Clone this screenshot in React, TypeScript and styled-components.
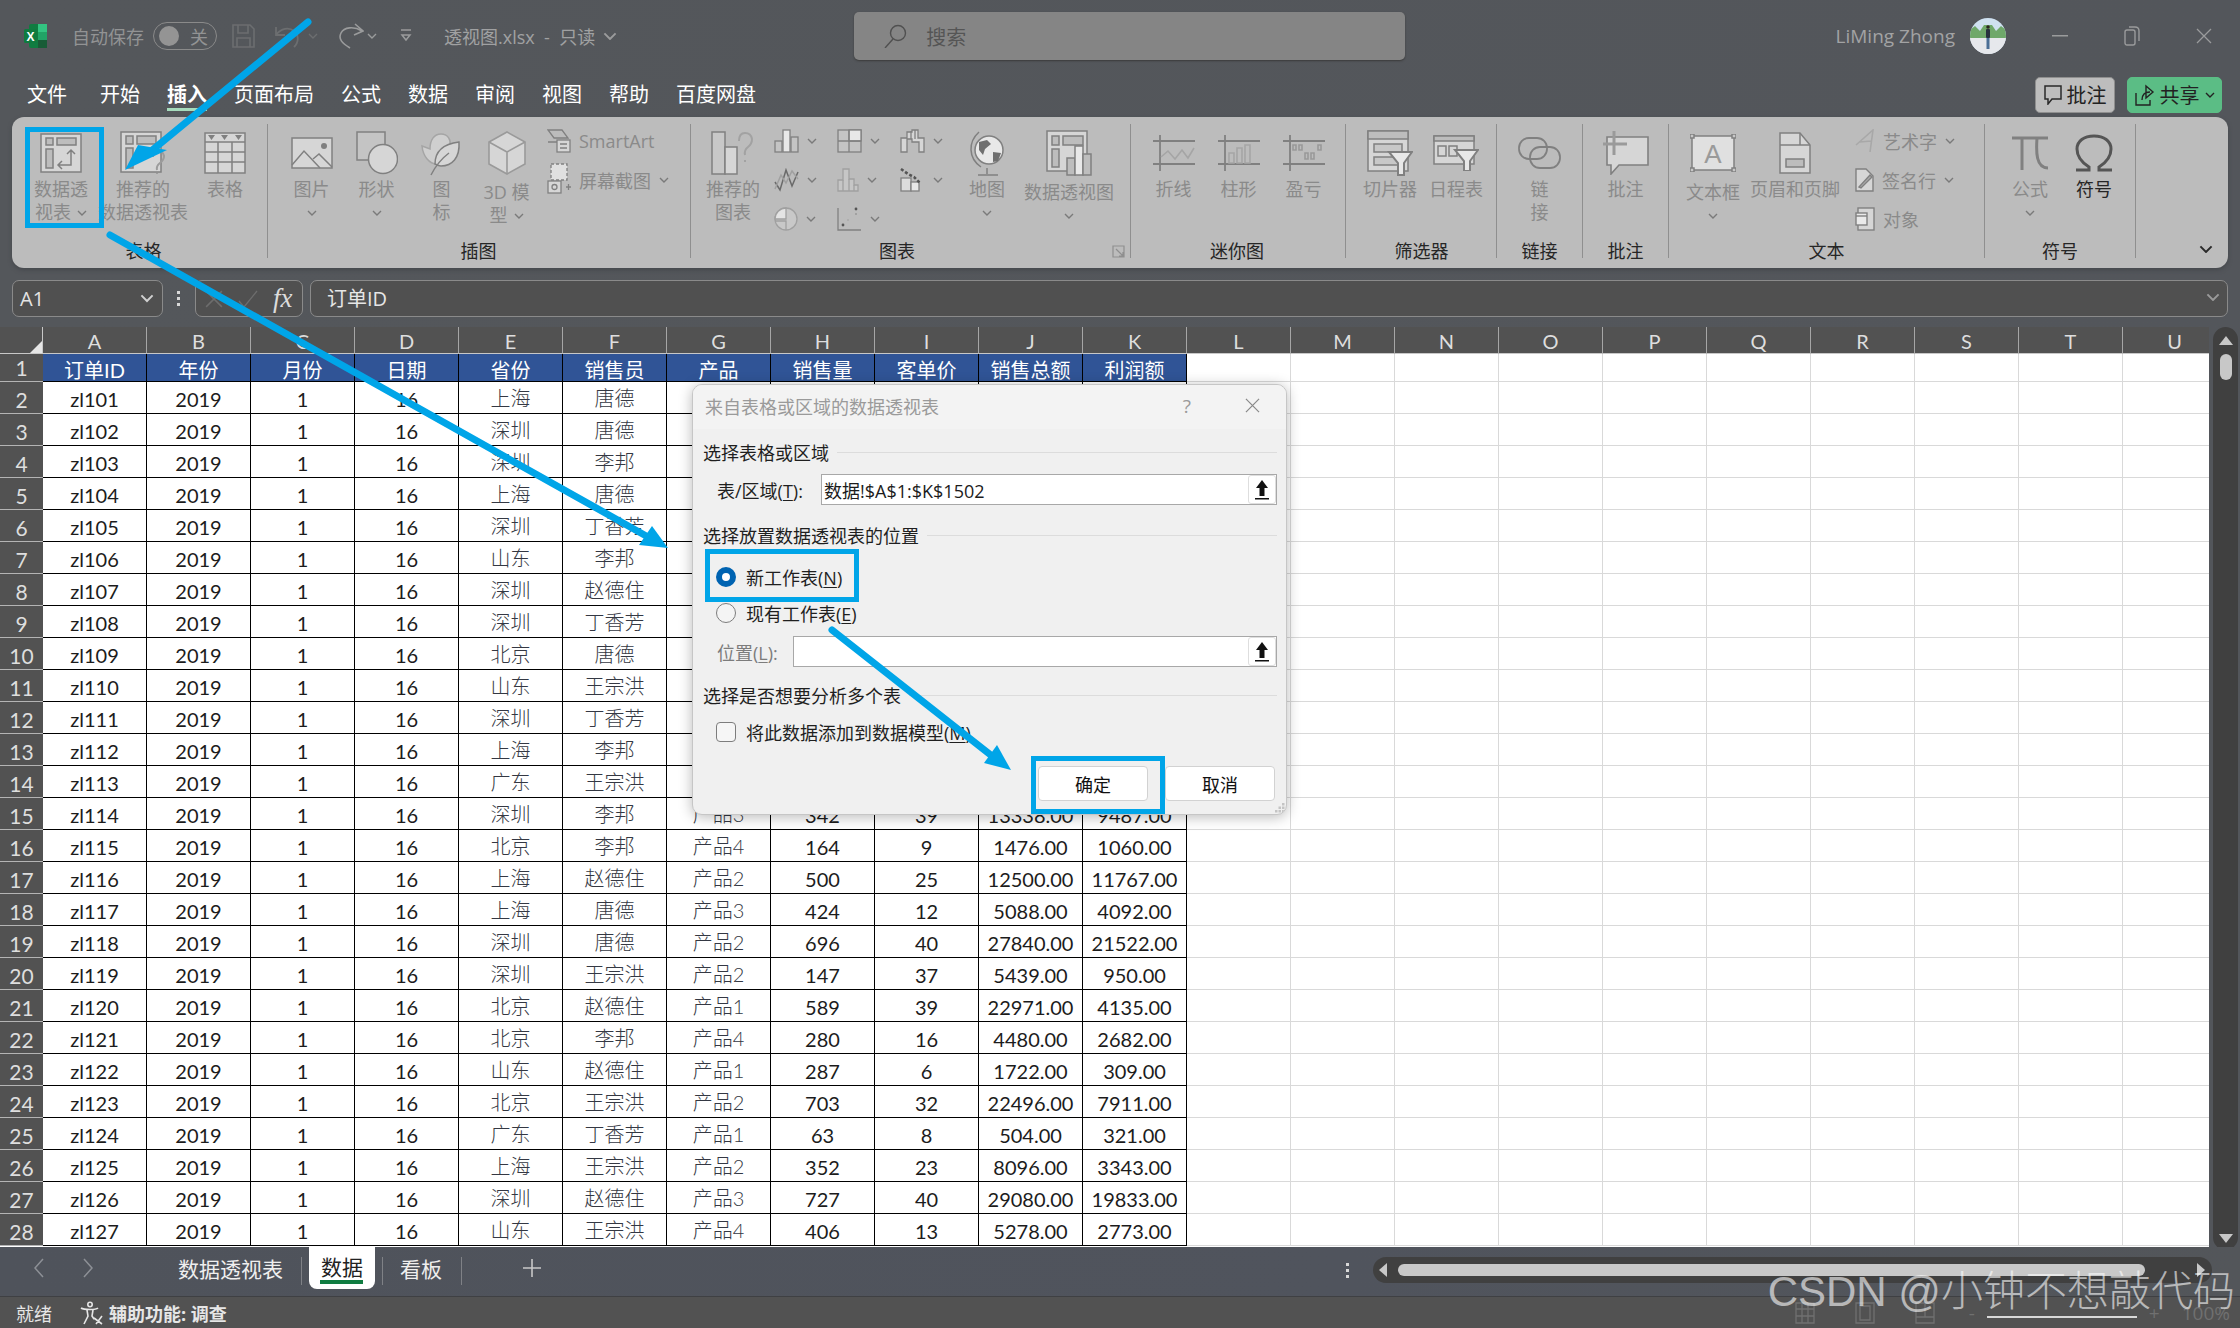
import React from "react";
import styled, { createGlobalStyle } from "styled-components";

const S = "#808080";
const F = "#d6d6d6";
const BLUE = "#00a5e8";

const GlobalStyle = createGlobalStyle`
  html, body {
    margin: 0;
    padding: 0;
    background: #54575b;
  }
  * {
    box-sizing: border-box;
  }
  body {
    font-family: "Open Sans", "Noto Sans CJK SC", sans-serif;
  }
`;

const Page = styled.div`
  position: relative;
  width: 2240px;
  height: 1328px;
  overflow: hidden;
  display: flex;
  flex-direction: column;
  background: linear-gradient(90deg, #54575b, #53565b);
`;

/* title bar */
const TitleBar = styled.div`
  height: 72px;
  flex: none;
  display: flex;
  align-items: center;
  padding-left: 24px;
  color: #929394;
`;
const Slot = styled.div<{ $ml?: number }>`
  margin-left: ${(p) => p.$ml ?? 0}px;
  display: flex;
  align-items: center;
  flex: none;
`;
const AutoSave = styled.span`
  margin-left: 24px;
  font-size: 18px;
`;
const Toggle = styled.div`
  margin-left: 9px;
  width: 64px;
  height: 28px;
  border: 1.5px solid #8a8a8a;
  border-radius: 14px;
  display: flex;
  align-items: center;
  padding-left: 5px;
  font-size: 18px;
  gap: 11px;
  &::before {
    content: "";
    width: 20px;
    height: 20px;
    border-radius: 50%;
    background: #949494;
  }
`;
const FileName = styled.span`
  margin-left: 32px;
  font-size: 18px;
  color: #a0a1a2;
  white-space: pre;
`;
const SearchBox = styled.div`
  margin-left: 237px;
  width: 551px;
  height: 48px;
  background: #858585;
  border-radius: 5px;
  box-shadow: 0 1px 2px #3a3a3a;
  display: flex;
  align-items: center;
  padding-left: 30px;
  gap: 19px;
  font-size: 20px;
  color: #555;
`;
const TitleRight = styled.div`
  margin-left: auto;
  display: flex;
  align-items: center;
  padding-right: 28px;
`;
const UserName = styled.span`
  font-size: 19px;
  color: #a2a3a4;
`;

/* menu row */
const MenuRow = styled.div`
  height: 45px;
  flex: none;
  display: flex;
  align-items: center;
  padding: 0 18px 0 27px;
  gap: 27px;
`;
const MenuItem = styled.div<{ $active?: boolean }>`
  position: relative;
  font-size: 20px;
  line-height: 28px;
  color: #fff;
  font-weight: ${(p) => (p.$active ? 700 : 400)};
  &:first-child {
    margin-right: 6px;
  }
  ${(p) =>
    p.$active &&
    `&::after {
      content: "";
      position: absolute;
      left: 0;
      right: 0;
      bottom: -2px;
      height: 3px;
      background: #a6dcbd;
    }`}
`;
const MenuRight = styled.div`
  margin-left: auto;
  display: flex;
  gap: 12px;
`;
const PillButton = styled.div<{ $green?: boolean }>`
  height: 36px;
  width: ${(p) => (p.$green ? 95 : 80)}px;
  border-radius: 5px;
  background: ${(p) => (p.$green ? "#5bbd85" : "#bdbdbd")};
  border: 1px solid ${(p) => (p.$green ? "#5bbd85" : "#8f8f8f")};
  color: #222;
  font-size: 20px;
  display: flex;
  align-items: center;
  justify-content: center;
  gap: 5px;
`;

/* ribbon */
const Ribbon = styled.div`
  height: 151px;
  flex: none;
  margin: 0 12px;
  border-radius: 12px;
  background: #bcbcbc;
  box-shadow: 0 2px 4px #45484c;
  display: flex;
  position: relative;
`;
const Group = styled.div<{ $w: number; $pl?: number; $last?: boolean }>`
  width: ${(p) => p.$w}px;
  height: 134px;
  margin-top: 7px;
  flex: none;
  display: flex;
  flex-direction: column;
  border-right: ${(p) => (p.$last ? "none" : "1px solid #8f8f8f")};
  padding-left: ${(p) => p.$pl ?? 0}px;
`;
const GroupBody = styled.div<{ $center?: boolean }>`
  flex: 1;
  display: flex;
  justify-content: ${(p) => (p.$center ? "center" : "flex-start")};
`;
const GroupLabel = styled.div<{ $pr?: number }>`
  height: 14px;
  line-height: 14px;
  font-size: 18px;
  color: #262626;
  text-align: center;
  white-space: nowrap;
  padding-right: ${(p) => p.$pr ?? 0}px;
`;
const Big = styled.div<{ $w: number; $ml?: number; $dark?: boolean; $drop?: boolean }>`
  width: ${(p) => p.$w}px;
  margin-left: ${(p) => p.$ml ?? 0}px;
  flex: none;
  display: flex;
  flex-direction: column;
  align-items: center;
  padding-top: 3px;
  font-size: 18px;
  line-height: 23px;
  color: ${(p) => (p.$dark ? "#262626" : "#8a8a8a")};
`;
const BigIcon = styled.div<{ $drop?: boolean }>`
  height: ${(p) => (p.$drop ? 54 : 51)}px;
  padding-bottom: ${(p) => (p.$drop ? 3 : 0)}px;
  display: flex;
  align-items: center;
  justify-content: center;
  flex: none;
`;
const Line = styled.div`
  white-space: nowrap;
  height: 23px;
  display: flex;
  align-items: center;
  gap: 6px;
`;
const Stack = styled.div<{ $w?: number; $ml?: number }>`
  margin-top: -3px;
  margin-left: ${(p) => p.$ml ?? 0}px;
  width: ${(p) => (p.$w ? `${p.$w}px` : "auto")};
  flex: none;
`;
const StackRow = styled.div`
  height: 39px;
  display: flex;
  align-items: center;
  gap: 8px;
  font-size: 18px;
  color: #8a8a8a;
  white-space: nowrap;
`;
const ChartGrid = styled.div`
  margin-top: -3px;
  margin-left: 6px;
  width: 189px;
  flex: none;
  display: grid;
  grid-template-columns: repeat(3, 63px);
  grid-auto-rows: 39px;
  align-items: center;
`;
const ChartCell = styled.div`
  display: flex;
  align-items: center;
  gap: 8px;
`;
const Collapse = styled.div`
  position: absolute;
  right: 15px;
  bottom: 15px;
  display: flex;
`;
const Launcher = styled.div`
  position: absolute;
  right: 5px;
  bottom: 0;
  display: flex;
`;
const GroupRel = styled(Group)`
  position: relative;
`;

/* formula bar */
const FormulaBar = styled.div`
  height: 59px;
  flex: none;
  padding: 12px 12px 10px;
  display: flex;
  align-items: stretch;
`;
const NameBox = styled.div`
  width: 151px;
  background: #505050;
  border: 1px solid #8a8a8a;
  border-radius: 7px;
  display: flex;
  align-items: center;
  justify-content: space-between;
  padding: 0 8px 0 7px;
  font-size: 20px;
  color: #e4e4e4;
`;
const Dots = styled.div`
  width: 32px;
  display: flex;
  align-items: center;
  justify-content: center;
`;
const FxBox = styled.div`
  width: 108px;
  background: #505050;
  border: 1px solid #8a8a8a;
  border-radius: 7px;
  display: flex;
  align-items: center;
  padding-left: 9px;
  gap: 15px;
`;
const Fx = styled.span`
  font-family: "Liberation Serif", serif;
  font-style: italic;
  font-size: 27px;
  color: #dcdcdc;
`;
const FormulaInput = styled.div`
  flex: 1;
  margin-left: 7px;
  background: #505050;
  border: 1px solid #8a8a8a;
  border-radius: 7px;
  display: flex;
  align-items: center;
  justify-content: space-between;
  padding: 0 7px 3px 16px;
  font-size: 20px;
  color: #e6e6e6;
`;

/* sheet */
const SheetRow = styled.div`
  height: 920px;
  flex: none;
  display: flex;
`;
const Sheet = styled.div`
  width: 2209px;
  flex: none;
  overflow: hidden;
  display: grid;
  grid-template-columns: 43px repeat(21, 104px);
  grid-template-rows: 27px 28px repeat(27, 32px);
  background: #fff;
  font-family: Lato, "Noto Sans CJK SC", sans-serif;
  font-size: 20px;
`;
const Corner = styled.div`
  background: #525252;
  position: relative;
  border-bottom: 1px solid #c8c8c8;
  border-right: 1px solid #c8c8c8;
  &::after {
    content: "";
    position: absolute;
    right: 0;
    bottom: 0;
    border-style: solid;
    border-width: 0 0 12px 12px;
    border-color: transparent transparent #e6e6e6 transparent;
  }
`;
const ColHead = styled.div`
  background: #525252;
  color: #dedede;
  border-right: 1px solid #a6a6a6;
  border-bottom: 1px solid #c8c8c8;
  display: flex;
  align-items: center;
  justify-content: center;
  padding-top: 1px;
`;
const RowHead = styled.div`
  background: #525252;
  color: #dedede;
  font-size: 21px;
  border-bottom: 1px solid #b4b4b4;
  display: flex;
  align-items: flex-end;
  justify-content: center;
  padding-bottom: 1px;
`;
const Cell = styled.div<{ $tone: "head" | "data" | "blank"; $soft?: boolean }>`
  display: flex;
  align-items: center;
  justify-content: center;
  white-space: nowrap;
  padding-top: ${(p) => (p.$soft ? 0 : 3)}px;
  font-weight: ${(p) => (p.$soft ? 300 : 400)};
  background: ${(p) => (p.$tone === "head" ? "#305496" : "#fff")};
  color: ${(p) => (p.$tone === "head" ? "#fff" : p.$soft ? "#343843" : "#1c1c1c")};
  border-right: 1px solid ${(p) => (p.$tone === "blank" ? "#d9d9d9" : "#000")};
  border-bottom: 1px solid ${(p) => (p.$tone === "blank" ? "#d9d9d9" : "#000")};
`;
const ScrollColumn = styled.div`
  flex: 1;
  padding-left: 4px;
`;
const VScroll = styled.div`
  width: 25px;
  height: 923px;
  border-radius: 13px;
  background: #404040;
  display: flex;
  flex-direction: column;
  align-items: center;
  padding: 9px 0 7px;
`;
const VThumb = styled.div`
  width: 12px;
  height: 26px;
  border-radius: 6px;
  background: #c8c8c8;
  margin-top: 9px;
  margin-bottom: auto;
`;

/* sheet tabs */
const TabBar = styled.div`
  height: 49px;
  flex: none;
  display: flex;
  align-items: flex-start;
  background: linear-gradient(90deg, #4f535b, #50545d 60%, #53565a);
  position: relative;
`;
const TabNav = styled.div`
  width: 178px;
  height: 42px;
  flex: none;
  display: flex;
  align-items: center;
  padding-left: 34px;
  gap: 39px;
`;
const Tab = styled.div<{ $active?: boolean }>`
  height: 42px;
  font-size: 21px;
  display: flex;
  align-items: center;
  color: ${(p) => (p.$active ? "#222" : "#efefef")};
  background: ${(p) => (p.$active ? "#fff" : "transparent")};
  border-radius: ${(p) => (p.$active ? "0 0 8px 8px" : "0")};
  padding: ${(p) => (p.$active ? "0 12px 4px" : "0")};
  position: relative;
  ${(p) =>
    p.$active &&
    `&::after {
      content: "";
      position: absolute;
      left: 11px;
      right: 12px;
      bottom: 5px;
      height: 4px;
      background: #107c41;
    }`}
`;
const TabDivider = styled.div<{ $l: number; $r: number }>`
  width: 1px;
  height: 28px;
  margin: 10px ${(p) => p.$r}px 0 ${(p) => p.$l}px;
  background: #7f8186;
  flex: none;
`;
const PlusMark = styled.div`
  margin-left: 61px;
  height: 42px;
  display: flex;
  align-items: center;
`;
const HScroll = styled.div`
  margin-left: auto;
  margin-right: 28px;
  margin-top: 10px;
  width: 839px;
  height: 26px;
  border-radius: 13px;
  background: #404040;
  display: flex;
  align-items: center;
  padding: 0 7px 0 6px;
  position: relative;
`;
const HThumb = styled.div`
  width: 747px;
  height: 12px;
  border-radius: 6px;
  background: #c8c8c8;
  margin-left: 11px;
  margin-right: auto;
`;
const VDots = styled.div`
  position: absolute;
  left: -27px;
  top: 5px;
  display: flex;
`;

/* status bar */
const StatusBar = styled.div`
  flex: 1;
  border-top: 1px solid #3f4043;
  background: #525252;
  display: flex;
  align-items: center;
  padding-left: 16px;
  color: #e6e6e6;
  font-size: 18px;
  position: relative;
`;
const StatusBold = styled.span`
  font-weight: 700;
  margin-left: 5px;
`;
const StatusRight = styled.div`
  margin-left: auto;
  padding-right: 10px;
  display: flex;
  align-items: center;
  color: #707070;
  font-size: 19px;
`;
const ZoomSlider = styled.div`
  width: 150px;
  height: 2px;
  background: #d8d8d8;
  margin: 8px 12px 0;
`;
const Watermark = styled.div`
  position: absolute;
  right: 5px;
  top: 1262px;
  font-size: 42px;
  line-height: 60px;
  font-weight: 300;
  font-family: "Liberation Sans", "Noto Sans CJK SC", sans-serif;
  color: rgba(255, 255, 255, 0.6);
  white-space: nowrap;
  pointer-events: none;
`;

/* dialog */
const Dialog = styled.div`
  position: absolute;
  left: 692px;
  top: 384px;
  width: 595px;
  height: 431px;
  background: #f0f0f0;
  border: 1px solid #c6c6c6;
  border-radius: 10px;
  box-shadow: 0 2px 14px rgba(0, 0, 0, 0.28);
  font-size: 18px;
  color: #1f1f1f;
  display: flex;
  flex-direction: column;
  overflow: hidden;
`;
const DialogTitle = styled.div`
  height: 44px;
  flex: none;
  background: #f3f3f3;
  display: flex;
  align-items: center;
  padding: 0 26px 3px 12px;
  color: #9a9a9a;
`;
const DialogHelp = styled.span`
  margin-left: auto;
  margin-right: 54px;
  font-size: 19px;
`;
const DialogBody = styled.div`
  flex: 1;
  padding: 10px 9px 0 10px;
  display: flex;
  flex-direction: column;
  position: relative;
`;
const Section = styled.div<{ $mt?: number }>`
  height: 26px;
  display: flex;
  align-items: center;
  gap: 8px;
  margin-top: ${(p) => p.$mt ?? 0}px;
  white-space: nowrap;
  &::after {
    content: "";
    flex: 1;
    height: 1px;
    background: #dcdcdc;
  }
`;
const FieldRow = styled.div<{ $mt: number; $label: number; $dim?: boolean }>`
  margin-top: ${(p) => p.$mt}px;
  display: flex;
  align-items: center;
  padding-left: 14px;
  height: 31px;
  color: ${(p) => (p.$dim ? "#7c7c7c" : "#1f1f1f")};
  & > span {
    width: ${(p) => p.$label}px;
    flex: none;
    white-space: nowrap;
  }
`;
const FieldInput = styled.div`
  flex: 1;
  height: 31px;
  background: #fff;
  border: 1px solid #a8a8a8;
  display: flex;
  align-items: center;
  justify-content: space-between;
  padding-left: 2px;
  color: #1c1c1c;
`;
const UpButton = styled.div`
  width: 28px;
  height: 29px;
  background: #fff;
  border: 1px solid #dedede;
  border-radius: 3px;
  display: flex;
  align-items: center;
  justify-content: center;
`;
const OptionRow = styled.div<{ $mt: number }>`
  margin-top: ${(p) => p.$mt}px;
  height: 26px;
  display: flex;
  align-items: center;
  padding-left: 13px;
  gap: 10px;
  white-space: nowrap;
`;
const Radio = styled.div<{ $on?: boolean }>`
  width: 20px;
  height: 20px;
  flex: none;
  border-radius: 50%;
  background: ${(p) => (p.$on ? "#fff" : "#f4f4f4")};
  border: ${(p) => (p.$on ? "6px solid #0063b1" : "1px solid #7d7d7d")};
`;
const CheckBox = styled.div`
  width: 20px;
  height: 20px;
  flex: none;
  border-radius: 4px;
  background: #f6f6f6;
  border: 1px solid #7d7d7d;
`;
const U = styled.span`
  text-decoration: underline;
  text-underline-offset: 2px;
`;
const DialogActions = styled.div`
  position: absolute;
  right: 11px;
  bottom: 13px;
  display: flex;
  gap: 17px;
`;
const DialogButton = styled.div`
  width: 110px;
  height: 35px;
  background: #fff;
  border: 1px solid #d2d2d2;
  border-radius: 4px;
  display: flex;
  align-items: center;
  justify-content: center;
  color: #111;
`;
const Grip = styled.div`
  position: absolute;
  right: 1px;
  bottom: 1px;
  display: flex;
`;

/* annotations */
const Highlight = styled.div<{ $x: number; $y: number; $w: number; $h: number }>`
  position: absolute;
  left: ${(p) => p.$x}px;
  top: ${(p) => p.$y}px;
  width: ${(p) => p.$w}px;
  height: ${(p) => p.$h}px;
  border: 5px solid ${BLUE};
  pointer-events: none;
`;
const Annotations = styled.svg`
  position: absolute;
  left: 0;
  top: 0;
  pointer-events: none;
`;

/* icons */
const Chev = ({ c = "#7a7a7a", w = 10 }: { c?: string; w?: number }) => (
  <svg width={w} height={w * 0.6} viewBox="0 0 10 6" fill="none">
    <path d="M1 1l4 4 4-4" stroke={c} strokeWidth="1.4" />
  </svg>
);

const ExcelLogo = () => (
  <svg width="24" height="24" viewBox="0 0 24 24">
    <rect x="5" y="0" width="18" height="24" rx="2" fill="#107c41" />
    <rect x="14" y="0" width="9" height="8" fill="#33c481" />
    <rect x="14" y="8" width="9" height="8" fill="#21a366" />
    <rect x="14" y="16" width="9" height="8" fill="#185c37" />
    <rect x="0" y="5" width="13" height="14" rx="1.5" fill="#0f7b3f" />
    <text x="6.5" y="16.5" fontSize="12" fontWeight="700" fill="#fff" textAnchor="middle" fontFamily="Liberation Sans">X</text>
  </svg>
);
const SaveIcon = () => (
  <svg width="23" height="24" viewBox="0 0 23 24" fill="none" stroke="#6c6e70" strokeWidth="1.6">
    <path d="M1 1h17l4 4v18H1z" />
    <path d="M6 1v8h10V1M5 23v-9h13v9" />
  </svg>
);
const UndoIcon = () => (
  <svg width="28" height="24" viewBox="0 0 28 24" fill="none" stroke="#6c6e70" strokeWidth="1.8">
    <path d="M1 3v8h9M1 11c5-7 13-8 18-4s5 11 0 16" />
  </svg>
);
const RedoIcon = () => (
  <svg width="26" height="26" viewBox="0 0 26 26" fill="none" stroke="#9a9b9c" strokeWidth="1.6">
    <path d="M17 1l8 7-9 4M24 8C16 3 6 4 3 10s1 10 9 15" />
  </svg>
);
const CustomizeIcon = () => (
  <svg width="12" height="14" viewBox="0 0 12 14" fill="none" stroke="#9a9b9c" strokeWidth="1.5">
    <path d="M1 1h10M2 6l4 5 4-5z" />
  </svg>
);
const SearchIcon = () => (
  <svg width="23" height="24" viewBox="0 0 23 24" fill="none" stroke="#505050" strokeWidth="1.4">
    <circle cx="14" cy="9" r="7.5" />
    <path d="M9 15l-8 9" />
  </svg>
);
const Avatar = () => (
  <svg width="36" height="36" viewBox="0 0 36 36">
    <defs>
      <clipPath id="av">
        <circle cx="18" cy="18" r="18" />
      </clipPath>
    </defs>
    <g clipPath="url(#av)">
      <rect width="36" height="36" fill="#cfe1f1" />
      <path d="M0 20v-8l5-4 5 5 4-6 8 0 4 6 5-5 5 4v8z" fill="#6fa86a" />
      <rect y="20" width="36" height="16" fill="#e6e8ec" />
      <circle cx="18" cy="9" r="1.800" fill="#2a2522" />
      <rect x="16" y="11" width="4" height="9" rx="1" fill="#27303e" />
      <rect x="16.500" y="20" width="3" height="11" fill="#4b6f96" />
    </g>
  </svg>
);
const WinMin = () => (
  <svg width="16" height="2">
    <rect width="16" height="1.5" fill="#9a9b9c" />
  </svg>
);
const WinRestore = () => (
  <svg width="16" height="22" viewBox="0 0 16 22" fill="none" stroke="#9a9b9c" strokeWidth="1.4">
    <rect x="1" y="5" width="10" height="15" rx="2" />
    <path d="M5 2h6q4 0 4 4v10" />
  </svg>
);
const CrossIcon = ({ s = 16, c = "#9a9b9c" }: { s?: number; c?: string }) => (
  <svg width={s} height={s} viewBox="0 0 16 16" fill="none" stroke={c} strokeWidth="1.3">
    <path d="M1 1l14 14M15 1L1 15" />
  </svg>
);
const CommentSmall = () => (
  <svg width="18" height="20" viewBox="0 0 18 20" fill="none" stroke="#2a2a2a" strokeWidth="1.5">
    <path d="M1 1h16v13H8l-4 5v-5H1z" />
  </svg>
);
const ShareIcon = () => (
  <svg width="20" height="22" viewBox="0 0 20 22" fill="none" stroke="#222" strokeWidth="1.4">
    <path d="M1 9v12h14v-5M7 16c0-6 3-8 8-8M11 2l7 6-7 6z" />
  </svg>
);

const PivotIcon = () => (
  <svg width="42" height="40" viewBox="0 0 42 40" fill="none" stroke={S} strokeWidth="1.5">
    <rect x="1" y="1" width="40" height="38" fill={F} />
    <rect x="6" y="5" width="7" height="7" fill="#bdbdbd" />
    <rect x="17" y="5" width="19" height="7" fill="#bdbdbd" />
    <rect x="6" y="16" width="7" height="19" fill="#bdbdbd" />
    <path d="M18 32h13V17M27 21l4-4 4 4M22 28l-4 4 4 4" />
  </svg>
);
const RecPivotIcon = () => (
  <svg width="46" height="44" viewBox="0 0 46 44" fill="none" stroke={S} strokeWidth="1.5">
    <rect x="1" y="1" width="40" height="40" fill={F} />
    <rect x="6" y="5" width="7" height="8" fill="#bdbdbd" />
    <rect x="17" y="5" width="19" height="8" fill="#bdbdbd" />
    <rect x="6" y="17" width="7" height="20" fill="#bdbdbd" />
    <path d="M33 26q0-6 5-6t6 5q0 4-4 7t-3 7M37 42v1" strokeWidth="2" stroke="#9c9c9c" />
  </svg>
);
const TableIcon = () => (
  <svg width="42" height="42" viewBox="0 0 42 42" fill="none" stroke={S} strokeWidth="1.5">
    <rect x="1" y="1" width="40" height="40" fill={F} />
    <path d="M1 10h40M1 20h40M1 30h40M14 10v31M28 10v31" />
    <path d="M4 3h7l-3.500 5zM17 3h7l-3.500 5zM31 3h7l-3.500 5z" fill={S} stroke="none" />
  </svg>
);
const PictureIcon = () => (
  <svg width="42" height="32" viewBox="0 0 42 32" fill="none" stroke={S} strokeWidth="1.5">
    <rect x="1" y="1" width="40" height="30" fill={F} />
    <path d="M1 28l12-14 16 17M22 22l6-5 13 13" />
    <circle cx="33" cy="9" r="3" fill={S} stroke="none" />
  </svg>
);
const ShapeIcon = () => (
  <svg width="42" height="44" viewBox="0 0 42 44" fill="none" stroke={S} strokeWidth="1.5">
    <rect x="1" y="1" width="28" height="28" fill="#c4c4c4" />
    <circle cx="27" cy="28" r="14.500" fill={F} />
  </svg>
);
const IconsIcon = () => (
  <svg width="42" height="46" viewBox="0 0 42 46" fill="none" stroke={S} strokeWidth="1.5">
    <path d="M1 16l8 3c0-9 4-15 11-15s10 6 9 11l6 1-5 6c-1 8-7 12-14 12C8 34 2 26 1 16z" fill="#cfcfcf" stroke="#a5a5a5" />
    <path d="M14 34c0-12 8-20 24-22 1 16-7 24-18 24-2 0-4-1-6-2z" fill={F} />
    <path d="M10 45c4-8 10-16 18-22" />
  </svg>
);
const CubeIcon = () => (
  <svg width="38" height="44" viewBox="0 0 38 44" fill="none" stroke="#9a9a9a" strokeWidth="1.6">
    <path d="M19 1l18 10v22L19 43 1 33V11z" fill={F} />
    <path d="M1 11l18 10 18-10M19 21v22" />
  </svg>
);
const SmartArtIcon = () => (
  <svg width="24" height="24" viewBox="0 0 24 24" fill="none" stroke={S} strokeWidth="1.3">
    <path d="M1 1h14l6 8H7zM1 13h9" />
    <rect x="10" y="11" width="13" height="12" fill={F} />
    <path d="M13 15h7M13 19h7" />
  </svg>
);
const ScreenshotIcon = () => (
  <svg width="24" height="34" viewBox="0 0 24 34" fill="none" stroke={S} strokeWidth="1.3">
    <rect x="4" y="1" width="16" height="16" fill="#e0e0e0" strokeDasharray="3 2" />
    <rect x="1" y="18" width="13" height="12" fill={F} />
    <circle cx="7.500" cy="24" r="2.500" />
    <path d="M19 24h5M21.500 21v6" />
  </svg>
);
const RecChartIcon = () => (
  <svg width="44" height="44" viewBox="0 0 44 44" fill="none" stroke={S} strokeWidth="1.5">
    <rect x="1" y="1" width="13" height="42" fill="#c8c8c8" />
    <rect x="14" y="16" width="12" height="27" fill={F} />
    <path d="M28 10q0-8 6-8t7 6q0 5-4 8t-3 8M34 29v2" stroke="#a2a2a2" strokeWidth="2" />
  </svg>
);
const ColChart = () => (
  <svg width="25" height="24" viewBox="0 0 25 24" fill="none" stroke={S} strokeWidth="1.3">
    <rect x="1" y="12" width="7" height="11" fill="#c4c4c4" />
    <rect x="9" y="1" width="7" height="22" fill="#e8e8e8" />
    <rect x="17" y="8" width="7" height="15" fill="#c4c4c4" />
  </svg>
);
const HierChart = () => (
  <svg width="25" height="24" viewBox="0 0 25 24" fill="none" stroke={S} strokeWidth="1.3">
    <rect x="1" y="1" width="23" height="22" fill="#c4c4c4" />
    <rect x="12" y="1" width="12" height="11" fill="#e8e8e8" />
    <path d="M12 1v22M1 12h23" />
  </svg>
);
const WaterfallChart = () => (
  <svg width="25" height="24" viewBox="0 0 25 24" fill="none" stroke={S} strokeWidth="1.3">
    <path d="M1 23V9h6V3h5V1h6v8h6v14h-5V13h-7v-3H7v13z" fill={F} />
    <path d="M11 2v8M15 1v9" />
  </svg>
);
const LineChart = () => (
  <svg width="25" height="24" viewBox="0 0 25 24" fill="none" stroke="#6a6a6a" strokeWidth="1.5">
    <path d="M1 14l5 8 6-20 6 16 6-14" />
    <path d="M1 21l6-14 5 8 6-12 6 8" stroke="#a0a0a0" />
  </svg>
);
const StatChart = () => (
  <svg width="22" height="24" viewBox="0 0 22 24" fill="none" stroke="#a0a0a0" strokeWidth="1.3">
    <path d="M1 23V12h5V1h6v10h5v6h4v6z" fill="#c6c6c6" />
    <path d="M6 12v11M12 11v12M17 17v6" />
  </svg>
);
const ComboChart = () => (
  <svg width="25" height="24" viewBox="0 0 25 24" fill="none" stroke={S} strokeWidth="1.3">
    <rect x="1" y="10" width="10" height="13" fill="#dcdcdc" />
    <rect x="11" y="14" width="8" height="9" fill="#e8e8e8" />
    <path d="M1 1l7 5 6 3 6 6" stroke="#555" strokeWidth="2.600" strokeDasharray="3 2" />
  </svg>
);
const PieChart = () => (
  <svg width="24" height="24" viewBox="0 0 24 24" fill="none" stroke="#a0a0a0" strokeWidth="1.3">
    <circle cx="12" cy="12" r="11" fill="#c8c8c8" />
    <path d="M12 12V1A11 11 0 0 0 1 12z" fill="#e4e4e4" />
    <path d="M1 14h11v9" />
  </svg>
);
const ScatterChart = () => (
  <svg width="25" height="24" viewBox="0 0 25 24" fill="none" stroke={S} strokeWidth="1.3">
    <path d="M1 1v22h23" />
    <circle cx="6" cy="18" r="1.400" fill="#555" stroke="none" />
    <circle cx="19" cy="2" r="1.400" fill="#555" stroke="none" />
    <circle cx="19" cy="7" r="1" fill="#999" stroke="none" />
    <circle cx="11" cy="13" r="1" fill="#aaa" stroke="none" />
  </svg>
);
const GlobeIcon = () => (
  <svg width="36" height="46" viewBox="0 0 36 46" fill="none" stroke={S} strokeWidth="1.5">
    <circle cx="20" cy="20" r="14" fill="#e8e8e8" />
    <path d="M10 12l8-2 4 4-6 5-2 6-4-5zM24 22l8 1-3 8-5 1z" fill="#6f6f6f" stroke="none" />
    <path d="M10 2C-1 12-1 28 12 37M18 38v6M9 45h20" />
  </svg>
);
const PivotChartIcon = () => (
  <svg width="46" height="46" viewBox="0 0 46 46" fill="none" stroke={S} strokeWidth="1.5">
    <rect x="1" y="1" width="40" height="40" fill={F} />
    <rect x="6" y="6" width="7" height="9" fill="#bdbdbd" />
    <rect x="17" y="6" width="20" height="9" fill="#bdbdbd" />
    <rect x="6" y="19" width="7" height="18" fill="#bdbdbd" />
    <rect x="21" y="28" width="8" height="17" fill="#bdbdbd" />
    <rect x="29" y="16" width="8" height="29" fill="#e8e8e8" />
    <rect x="37" y="24" width="8" height="21" fill="#bdbdbd" />
  </svg>
);
const SparkFrame = ({ children }: { children: React.ReactNode }) => (
  <svg width="42" height="36" viewBox="0 0 42 36" fill="none" stroke={S} strokeWidth="1.6">
    <path d="M0 6h42M0 29h42M7 0v36" strokeWidth="1.8" />
    {children}
  </svg>
);
const SparkLine = () => (
  <SparkFrame>
    <path d="M8 22l7-6 7 8 7-9 6 8 6-10" stroke="#a5a5a5" />
  </SparkFrame>
);
const SparkCol = () => (
  <SparkFrame>
    <path d="M11 18h5v10h-5zM19 13h5v15h-5zM27 10h5v18h-5z" stroke="#a5a5a5" />
  </SparkFrame>
);
const SparkWin = () => (
  <SparkFrame>
    <path d="M10 10h3v5h-3zM16 10h3v5h-3zM22 18h3v6h-3zM28 18h3v6h-3zM35 10h3v5h-3z" stroke="#999" />
  </SparkFrame>
);
const SlicerIcon = () => (
  <svg width="46" height="46" viewBox="0 0 46 46" fill="none" stroke={S} strokeWidth="1.5">
    <rect x="1" y="1" width="40" height="40" fill={F} />
    <rect x="1" y="1" width="40" height="8" fill="#bdbdbd" />
    <rect x="7" y="14" width="28" height="8" fill="#c8c8c8" />
    <rect x="7" y="27" width="28" height="8" fill="#c8c8c8" />
    <path d="M22 22h23l-8 11v12h-6V33z" fill="#e8e8e8" strokeWidth="2" />
  </svg>
);
const TimelineIcon = () => (
  <svg width="46" height="36" viewBox="0 0 46 36" fill="none" stroke={S} strokeWidth="1.5">
    <rect x="1" y="1" width="40" height="28" fill={F} />
    <rect x="1" y="1" width="40" height="5" fill="#bdbdbd" />
    <path d="M5 11h8v10H5zM16 11h8v10h-8z" />
    <path d="M22 15h23l-8 11v10h-6V26z" fill="#e8e8e8" strokeWidth="2" />
  </svg>
);
const LinkIcon = () => (
  <svg width="43" height="32" viewBox="0 0 43 32" fill="none" stroke={S} strokeWidth="1.8">
    <rect x="1" y="1" width="28" height="21" rx="10" />
    <rect x="12" y="10" width="30" height="21" rx="10" />
  </svg>
);
const CommentPlusIcon = () => (
  <svg width="46" height="44" viewBox="0 0 46 44" fill="none" stroke={S} strokeWidth="1.6">
    <path d="M4 6h41v28H16l-8 9v-9H4z" fill={F} />
    <path d="M0 13h24M11 0v24" stroke="#9a9a9a" strokeWidth="3" />
  </svg>
);
const TextBoxIcon = () => (
  <svg width="46" height="38" viewBox="0 0 46 38" fill="none" stroke={S} strokeWidth="1.5">
    <rect x="2" y="2" width="42" height="34" fill="#e0e0e0" />
    <text x="23" y="29" fontSize="26" fill="#9a9a9a" stroke="none" textAnchor="middle" fontFamily="Liberation Sans">A</text>
    <path d="M0 0h4v4H0zM42 0h4v4h-4zM0 34h4v4H0zM42 34h4v4h-4z" fill="#c8c8c8" />
  </svg>
);
const PageIcon = () => (
  <svg width="32" height="42" viewBox="0 0 32 42" fill="none" stroke={S} strokeWidth="1.5">
    <path d="M1 1h20l10 12v28H1z" fill={F} />
    <path d="M21 1v12h10M1 13h20" />
    <rect x="7" y="27" width="18" height="8" fill="#bdbdbd" />
  </svg>
);
const WordArtIcon = () => (
  <svg width="20" height="24" viewBox="0 0 20 24" fill="none" stroke="#a8a8a8" strokeWidth="1.6">
    <path d="M1 16L18 1l-3 22M5 13l11-1" />
  </svg>
);
const SignIcon = () => (
  <svg width="19" height="24" viewBox="0 0 19 24" fill="none" stroke={S} strokeWidth="1.4">
    <path d="M1 1h10l7 7v15H1z" fill={F} />
    <path d="M4 19L15 7l2 2L6 20z" fill="#a8a8a8" />
  </svg>
);
const ObjectIcon = () => (
  <svg width="20" height="24" viewBox="0 0 20 24" fill="none" stroke={S} strokeWidth="1.4">
    <rect x="3" y="1" width="16" height="22" fill={F} />
    <rect x="1" y="6" width="11" height="12" fill="#eaeaea" />
    <path d="M1 9h11" />
  </svg>
);
const PiIcon = () => (
  <svg width="38" height="36" viewBox="0 0 38 36" fill="none" stroke={S} strokeWidth="3">
    <path d="M1 3h36M11 3v32M26 3c-1 14-1 30 11 30" />
  </svg>
);
const OmegaIcon = () => (
  <svg width="38" height="38" viewBox="0 0 38 38" fill="none" stroke="#555" strokeWidth="3">
    <path d="M1 36h13v-3C6 28 2 22 2 15 2 7 9 2 19 2s17 5 17 13c0 7-4 13-12 18v3h13" />
  </svg>
);
const Launch = () => (
  <svg width="13" height="13" viewBox="0 0 13 13" fill="none" stroke="#8f8f8f" strokeWidth="1.2">
    <path d="M1 1h11v11H1zM4 4l7 7M7 11h4V7" />
  </svg>
);
const UpArrow = () => (
  <svg width="14" height="20" viewBox="0 0 14 20" fill="#111">
    <path d="M7 0l6 8H9.500v8h-5V8H1z" />
    <rect y="18" width="14" height="1.500" />
  </svg>
);
const KebabDots = () => (
  <svg width="4" height="18" viewBox="0 0 4 18" fill="#d8d8d8">
    <rect width="3" height="3" y="1" />
    <rect width="3" height="3" y="7" />
    <rect width="3" height="3" y="13" />
  </svg>
);
const Tri = ({ d }: { d: "up" | "down" | "left" | "right" }) => {
  const path = {
    up: "M7 0l7 9H0z",
    down: "M0 0h14L7 9z",
    left: "M8 0v14L0 7z",
    right: "M0 0l8 7-8 7z",
  }[d];
  const vertical = d === "up" || d === "down";
  return (
    <svg width={vertical ? 14 : 8} height={vertical ? 9 : 14}>
      <path d={path} fill="#c8c8c8" />
    </svg>
  );
};
const NavChevron = ({ left }: { left?: boolean }) => (
  <svg width="10" height="20" viewBox="0 0 10 20" fill="none" stroke="#8d9096" strokeWidth="1.5">
    <path d={left ? "M9 1L1 10l8 9" : "M1 1l8 9-8 9"} />
  </svg>
);
const PlusIcon = () => (
  <svg width="18" height="18" viewBox="0 0 18 18" stroke="#c8c8c8" strokeWidth="1.6">
    <path d="M9 0v18M0 9h18" />
  </svg>
);
const AccessIcon = () => (
  <svg width="24" height="24" viewBox="0 0 24 24" fill="none" stroke="#e6e6e6" strokeWidth="1.6">
    <circle cx="10" cy="3.500" r="2.200" />
    <path d="M1 7c3 2 15 2 17 0M7 9l1 6-4 8M13 9l-1 6 2 3M14 17l8 6M22 15l-6 8" />
  </svg>
);
const GridIcon = () => (
  <svg width="20" height="22" viewBox="0 0 20 22" fill="none" stroke="#707070" strokeWidth="1.300">
    <path d="M1 1h18v20H1zM1 7h18M1 14h18M7 1v20M13 1v20" />
  </svg>
);
const PageViewIcon = () => (
  <svg width="20" height="22" viewBox="0 0 20 22" fill="none" stroke="#707070" strokeWidth="1.300">
    <path d="M1 1h18v20H1zM5 4h10v14H5z" />
  </svg>
);
const BreakIcon = () => (
  <svg width="20" height="22" viewBox="0 0 20 22" fill="none" stroke="#707070" strokeWidth="1.300">
    <path d="M1 1h18v20H1zM1 15h18M10 1v14" />
  </svg>
);
const GripDots = () => (
  <svg width="10" height="10" viewBox="0 0 10 10" fill="#c4c4c4">
    <rect x="7" y="0" width="2.500" height="2.500" />
    <rect x="3.500" y="3.500" width="2.500" height="2.500" />
    <rect x="7" y="3.500" width="2.500" height="2.500" />
    <rect x="0" y="7" width="2.500" height="2.500" />
    <rect x="3.500" y="7" width="2.500" height="2.500" />
    <rect x="7" y="7" width="2.500" height="2.500" />
  </svg>
);

/* data */
const COLS = "ABCDEFGHIJKLMNOPQRSTU".split("");
const HEADERS = ["订单ID", "年份", "月份", "日期", "省份", "销售员", "产品", "销售量", "客单价", "销售总额", "利润额"];
type Row = [string, string, string?, string?, string?, string?, string?];
const ROWS: Row[] = [
  ["上海", "唐德"],
  ["深圳", "唐德"],
  ["深圳", "李邦"],
  ["上海", "唐德"],
  ["深圳", "丁香芳"],
  ["山东", "李邦"],
  ["深圳", "赵德住"],
  ["深圳", "丁香芳"],
  ["北京", "唐德"],
  ["山东", "王宗洪"],
  ["深圳", "丁香芳"],
  ["上海", "李邦"],
  ["广东", "王宗洪"],
  ["深圳", "李邦", "产品3", "342", "39", "13338.00", "9487.00"],
  ["北京", "李邦", "产品4", "164", "9", "1476.00", "1060.00"],
  ["上海", "赵德住", "产品2", "500", "25", "12500.00", "11767.00"],
  ["上海", "唐德", "产品3", "424", "12", "5088.00", "4092.00"],
  ["深圳", "唐德", "产品2", "696", "40", "27840.00", "21522.00"],
  ["深圳", "王宗洪", "产品2", "147", "37", "5439.00", "950.00"],
  ["北京", "赵德住", "产品1", "589", "39", "22971.00", "4135.00"],
  ["北京", "李邦", "产品4", "280", "16", "4480.00", "2682.00"],
  ["山东", "赵德住", "产品1", "287", "6", "1722.00", "309.00"],
  ["北京", "王宗洪", "产品2", "703", "32", "22496.00", "7911.00"],
  ["广东", "丁香芳", "产品1", "63", "8", "504.00", "321.00"],
  ["上海", "王宗洪", "产品2", "352", "23", "8096.00", "3343.00"],
  ["深圳", "赵德住", "产品3", "727", "40", "29080.00", "19833.00"],
  ["山东", "王宗洪", "产品4", "406", "13", "5278.00", "2773.00"],
];
const BLANKS = COLS.slice(11);

const SMALL_CHARTS = [
  <ColChart />,
  <HierChart />,
  <WaterfallChart />,
  <LineChart />,
  <StatChart />,
  <ComboChart />,
  <PieChart />,
  <ScatterChart />,
];

function SheetGrid() {
  return (
    <Sheet>
      <Corner />
      {COLS.map((c) => (
        <ColHead key={c}>{c}</ColHead>
      ))}
      <RowHead>1</RowHead>
      {HEADERS.map((h) => (
        <Cell key={h} $tone="head">
          {h}
        </Cell>
      ))}
      {BLANKS.map((c) => (
        <Cell key={c} $tone="blank" />
      ))}
      {ROWS.map((r, i) => (
        <React.Fragment key={i}>
          <RowHead>{i + 2}</RowHead>
          <Cell $tone="data">{`zl${101 + i}`}</Cell>
          <Cell $tone="data">2019</Cell>
          <Cell $tone="data">1</Cell>
          <Cell $tone="data">16</Cell>
          {[0, 1, 2, 3, 4, 5, 6].map((k) => (
            <Cell key={k} $tone="data" $soft={k < 3}>
              {r[k]}
            </Cell>
          ))}
          {BLANKS.map((c) => (
            <Cell key={c} $tone="blank" />
          ))}
        </React.Fragment>
      ))}
    </Sheet>
  );
}

function RibbonBar() {
  return (
    <Ribbon>
      <Group $w={256} $pl={8}>
        <GroupBody>
          <Big $w={82}>
            <BigIcon><PivotIcon /></BigIcon>
            <Line>数据透</Line>
            <Line>视表 <Chev /></Line>
          </Big>
          <Big $w={82}>
            <BigIcon><RecPivotIcon /></BigIcon>
            <Line>推荐的</Line>
            <Line>数据透视表</Line>
          </Big>
          <Big $w={82}>
            <BigIcon><TableIcon /></BigIcon>
            <Line>表格</Line>
          </Big>
        </GroupBody>
        <GroupLabel>表格</GroupLabel>
      </Group>
      <Group $w={423} $pl={11}>
        <GroupBody>
          <Big $w={65}>
            <BigIcon><PictureIcon /></BigIcon>
            <Line>图片</Line>
            <Line><Chev /></Line>
          </Big>
          <Big $w={65}>
            <BigIcon><ShapeIcon /></BigIcon>
            <Line>形状</Line>
            <Line><Chev /></Line>
          </Big>
          <Big $w={65}>
            <BigIcon><IconsIcon /></BigIcon>
            <Line>图</Line>
            <Line>标</Line>
          </Big>
          <Big $w={65}>
            <BigIcon $drop><CubeIcon /></BigIcon>
            <Line>3D 模</Line>
            <Line>型 <Chev /></Line>
          </Big>
          <Stack $ml={8}>
            <StackRow><SmartArtIcon /> SmartArt</StackRow>
            <StackRow><ScreenshotIcon /> 屏幕截图 <Chev /></StackRow>
          </Stack>
        </GroupBody>
        <GroupLabel $pr={12}>插图</GroupLabel>
      </Group>
      <GroupRel $w={440} $pl={7}>
        <GroupBody>
          <Big $w={70}>
            <BigIcon><RecChartIcon /></BigIcon>
            <Line>推荐的</Line>
            <Line>图表</Line>
          </Big>
          <ChartGrid>
            {SMALL_CHARTS.map((icon, i) => (
              <ChartCell key={i}>
                {icon}
                <Chev />
              </ChartCell>
            ))}
          </ChartGrid>
          <Big $w={48}>
            <BigIcon><GlobeIcon /></BigIcon>
            <Line>地图</Line>
            <Line><Chev /></Line>
          </Big>
          <Big $w={82} $ml={17}>
            <BigIcon $drop><PivotChartIcon /></BigIcon>
            <Line>数据透视图</Line>
            <Line><Chev /></Line>
          </Big>
        </GroupBody>
        <GroupLabel $pr={34}>图表</GroupLabel>
        <Launcher><Launch /></Launcher>
      </GroupRel>
      <Group $w={215} $pl={10}>
        <GroupBody>
          <Big $w={65}>
            <BigIcon><SparkLine /></BigIcon>
            <Line>折线</Line>
          </Big>
          <Big $w={65}>
            <BigIcon><SparkCol /></BigIcon>
            <Line>柱形</Line>
          </Big>
          <Big $w={65}>
            <BigIcon><SparkWin /></BigIcon>
            <Line>盈亏</Line>
          </Big>
        </GroupBody>
        <GroupLabel $pr={12}>迷你图</GroupLabel>
      </Group>
      <Group $w={151} $pl={11}>
        <GroupBody>
          <Big $w={66}>
            <BigIcon><SlicerIcon /></BigIcon>
            <Line>切片器</Line>
          </Big>
          <Big $w={66}>
            <BigIcon><TimelineIcon /></BigIcon>
            <Line>日程表</Line>
          </Big>
        </GroupBody>
        <GroupLabel $pr={10}>筛选器</GroupLabel>
      </Group>
      <Group $w={86}>
        <GroupBody $center>
          <Big $w={60}>
            <BigIcon><LinkIcon /></BigIcon>
            <Line>链</Line>
            <Line>接</Line>
          </Big>
        </GroupBody>
        <GroupLabel>链接</GroupLabel>
      </Group>
      <Group $w={86}>
        <GroupBody $center>
          <Big $w={60}>
            <BigIcon><CommentPlusIcon /></BigIcon>
            <Line>批注</Line>
          </Big>
        </GroupBody>
        <GroupLabel>批注</GroupLabel>
      </Group>
      <Group $w={316} $pl={10}>
        <GroupBody>
          <Big $w={68}>
            <BigIcon $drop><TextBoxIcon /></BigIcon>
            <Line>文本框</Line>
            <Line><Chev /></Line>
          </Big>
          <Big $w={96}>
            <BigIcon><PageIcon /></BigIcon>
            <Line>页眉和页脚</Line>
          </Big>
          <Stack $ml={12}>
            <StackRow><WordArtIcon /> 艺术字 <Chev /></StackRow>
            <StackRow><SignIcon /> 签名行 <Chev /></StackRow>
            <StackRow><ObjectIcon /> 对象</StackRow>
          </Stack>
        </GroupBody>
        <GroupLabel $pr={10}>文本</GroupLabel>
      </Group>
      <Group $w={151} $pl={13}>
        <GroupBody>
          <Big $w={64}>
            <BigIcon><PiIcon /></BigIcon>
            <Line>公式</Line>
            <Line><Chev /></Line>
          </Big>
          <Big $w={64} $dark>
            <BigIcon><OmegaIcon /></BigIcon>
            <Line>符号</Line>
          </Big>
        </GroupBody>
        <GroupLabel $pr={13}>符号</GroupLabel>
      </Group>
      <Collapse><Chev c="#2a2a2a" w={14} /></Collapse>
    </Ribbon>
  );
}

function PivotDialog() {
  return (
    <Dialog>
      <DialogTitle>
        来自表格或区域的数据透视表
        <DialogHelp>?</DialogHelp>
        <CrossIcon s={15} c="#8a8a8a" />
      </DialogTitle>
      <DialogBody>
        <Section>选择表格或区域</Section>
        <FieldRow $mt={9} $label={104}>
          <span>表/区域(<U>T</U>):</span>
          <FieldInput>
            数据!$A$1:$K$1502
            <UpButton><UpArrow /></UpButton>
          </FieldInput>
        </FieldRow>
        <Section $mt={17}>选择放置数据透视表的位置</Section>
        <OptionRow $mt={16}>
          <Radio $on />
          <span>新工作表(<U>N</U>)</span>
        </OptionRow>
        <OptionRow $mt={10}>
          <Radio />
          <span>现有工作表(<U>E</U>)</span>
        </OptionRow>
        <FieldRow $mt={10} $label={76} $dim>
          <span>位置(<U>L</U>):</span>
          <FieldInput>
            <i />
            <UpButton><UpArrow /></UpButton>
          </FieldInput>
        </FieldRow>
        <Section $mt={15}>选择是否想要分析多个表</Section>
        <OptionRow $mt={11}>
          <CheckBox />
          <span>将此数据添加到数据模型(<U>M</U>)</span>
        </OptionRow>
        <DialogActions>
          <DialogButton>确定</DialogButton>
          <DialogButton>取消</DialogButton>
        </DialogActions>
        <Grip><GripDots /></Grip>
      </DialogBody>
    </Dialog>
  );
}

export default function App() {
  return (
    <Page>
      <GlobalStyle />
      <TitleBar>
        <ExcelLogo />
        <AutoSave>自动保存</AutoSave>
        <Toggle>关</Toggle>
        <Slot $ml={15}><SaveIcon /></Slot>
        <Slot $ml={20}><UndoIcon /></Slot>
        <Slot $ml={5}><Chev c="#6c6e70" /></Slot>
        <Slot $ml={20}><RedoIcon /></Slot>
        <Slot $ml={3}><Chev c="#9a9b9c" /></Slot>
        <Slot $ml={23}><CustomizeIcon /></Slot>
        <FileName>透视图.xlsx  -  只读</FileName>
        <Slot $ml={8}><Chev c="#9a9b9c" w={14} /></Slot>
        <SearchBox>
          <SearchIcon />
          搜索
        </SearchBox>
        <TitleRight>
          <UserName>LiMing Zhong</UserName>
          <Slot $ml={15}><Avatar /></Slot>
          <Slot $ml={46}><WinMin /></Slot>
          <Slot $ml={56}><WinRestore /></Slot>
          <Slot $ml={56}><CrossIcon /></Slot>
        </TitleRight>
      </TitleBar>
      <MenuRow>
        <MenuItem>文件</MenuItem>
        <MenuItem>开始</MenuItem>
        <MenuItem $active>插入</MenuItem>
        <MenuItem>页面布局</MenuItem>
        <MenuItem>公式</MenuItem>
        <MenuItem>数据</MenuItem>
        <MenuItem>审阅</MenuItem>
        <MenuItem>视图</MenuItem>
        <MenuItem>帮助</MenuItem>
        <MenuItem>百度网盘</MenuItem>
        <MenuRight>
          <PillButton><CommentSmall />批注</PillButton>
          <PillButton $green><ShareIcon />共享<Chev c="#222" /></PillButton>
        </MenuRight>
      </MenuRow>
      <RibbonBar />
      <FormulaBar>
        <NameBox>
          A1
          <Chev c="#d0d0d0" w={14} />
        </NameBox>
        <Dots><KebabDots /></Dots>
        <FxBox>
          <CrossIcon s={18} c="#6d6d6d" />
          <svg width="20" height="18" viewBox="0 0 20 18" fill="none" stroke="#6d6d6d" strokeWidth="1.300">
            <path d="M1 11l5 6L19 1" />
          </svg>
          <Fx>fx</Fx>
        </FxBox>
        <FormulaInput>
          订单ID
          <Chev c="#9a9a9a" w={14} />
        </FormulaInput>
      </FormulaBar>
      <SheetRow>
        <SheetGrid />
        <ScrollColumn>
          <VScroll>
            <Tri d="up" />
            <VThumb />
            <Tri d="down" />
          </VScroll>
        </ScrollColumn>
      </SheetRow>
      <TabBar>
        <TabNav>
          <NavChevron left />
          <NavChevron />
        </TabNav>
        <Tab>数据透视表</Tab>
        <TabDivider $l={18} $r={7} />
        <Tab $active>数据</Tab>
        <TabDivider $l={7} $r={17} />
        <Tab>看板</Tab>
        <TabDivider $l={19} $r={0} />
        <PlusMark><PlusIcon /></PlusMark>
        <HScroll>
          <VDots><KebabDots /></VDots>
          <Tri d="left" />
          <HThumb />
          <Tri d="right" />
        </HScroll>
      </TabBar>
      <StatusBar>
        就绪
        <Slot $ml={28}><AccessIcon /></Slot>
        <StatusBold>辅助功能: 调查</StatusBold>
        <StatusRight>
          <GridIcon />
          <Slot $ml={40}><PageViewIcon /></Slot>
          <Slot $ml={40}><BreakIcon /></Slot>
          <Slot $ml={34}>-</Slot>
          <ZoomSlider />
          +
          <Slot $ml={22}>100%</Slot>
        </StatusRight>
      </StatusBar>

      <PivotDialog />

      <Highlight $x={25} $y={127} $w={79} $h={101} />
      <Highlight $x={705} $y={549} $w={154} $h={53} />
      <Highlight $x={1031} $y={756} $w={134} $h={58} />
      <Annotations width="2240" height="1328" viewBox="0 0 2240 1328" fill="none" stroke={BLUE} strokeWidth="7" strokeLinecap="round">
        <path d="M308 22L150 152" />
        <path d="M125 170L138 145L167 150Z" fill={BLUE} stroke="none" />
        <path d="M110 235L648 537" />
        <path d="M668 548L652 526L639 545Z" fill={BLUE} stroke="none" />
        <path d="M832 630L992 756" />
        <path d="M1011 770L997 745L984 763Z" fill={BLUE} stroke="none" />
      </Annotations>
      <Watermark>CSDN @小钟不想敲代码</Watermark>
    </Page>
  );
}
